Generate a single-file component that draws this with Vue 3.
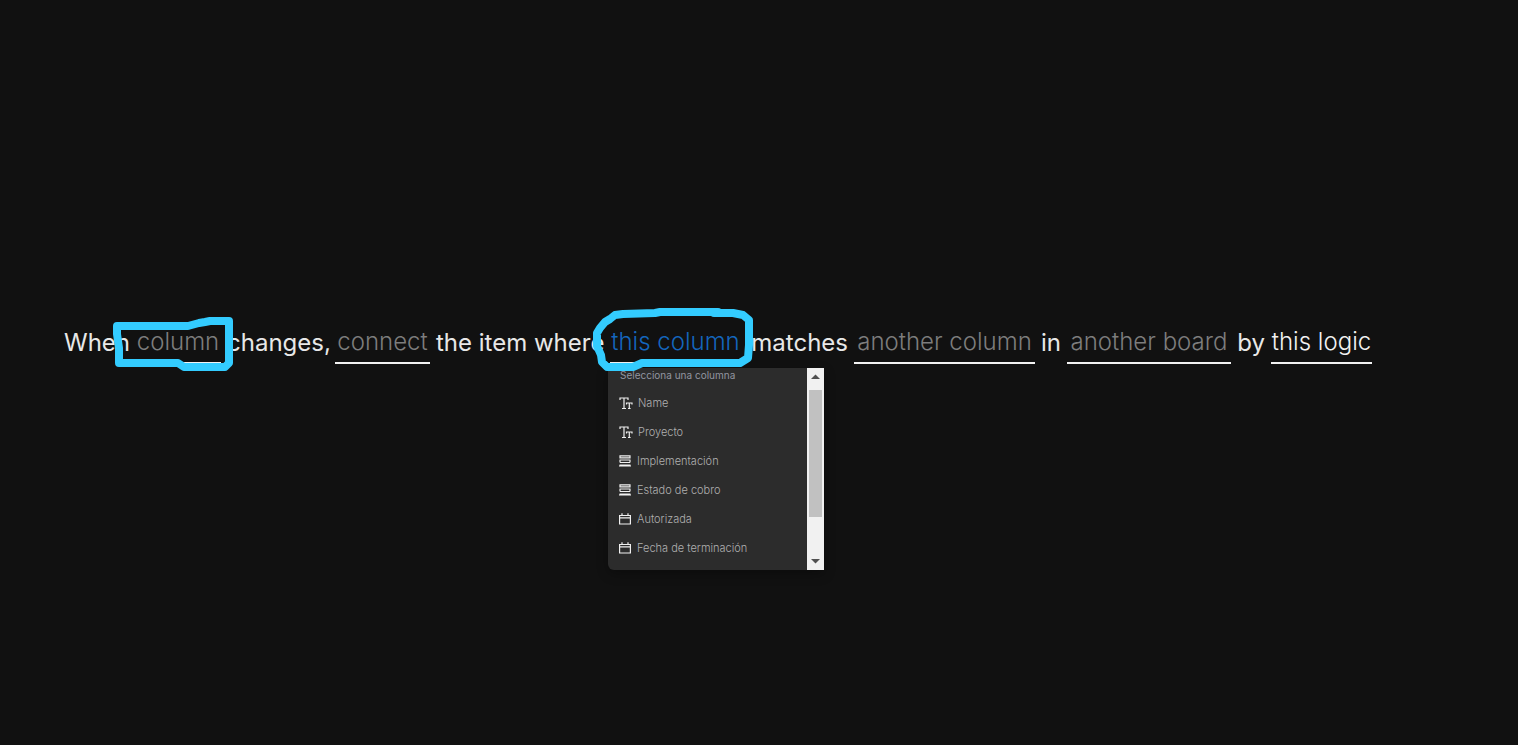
<script setup>
import { ref } from 'vue'

const parts = [
  { text: 'When' },
  { text: 'column', field: true, mark: 'box' },
  { text: 'changes,' },
  { text: 'connect', field: true },
  { text: 'the item where' },
  { text: 'this column', field: true, open: true, mark: 'round' },
  { text: 'matches' },
  { text: 'another column', field: true },
  { text: 'in' },
  { text: 'another board', field: true },
  { text: 'by' },
  { text: 'this logic', field: true, filled: true }
]

const columns = [
  { name: 'Name', icon: 'text' },
  { name: 'Proyecto', icon: 'text' },
  { name: 'Implementación', icon: 'status' },
  { name: 'Estado de cobro', icon: 'status' },
  { name: 'Autorizada', icon: 'date' },
  { name: 'Fecha de terminación', icon: 'date' }
]

const selected = ref('')
</script>

<template>
  <main class="page">
    <div class="sentence">
      <template v-for="part in parts" :key="part.text">
        <span v-if="!part.field" class="word">{{ part.text }}</span>
        <div v-else class="field">
          <button type="button" class="field-btn" :class="{ open: part.open, filled: part.filled }">{{ part.text }}</button>

          <div v-if="part.open" class="menu">
            <div class="menu-body">
              <div class="menu-title">Selecciona una columna</div>
              <ul class="options">
                <li v-for="col in columns" :key="col.name">
                  <button type="button" class="option" :class="col.icon" @click="selected = col.name">
                    <svg v-if="col.icon === 'text'" class="icon" width="14" height="13" viewBox="0 0 14 13">
                      <path d="M1 3V1h8v2M5 1v10.500M3 11.500h4M7.500 7.500V6h5.500v1.500M10.300 6v5.500M9 11.500h2.600" />
                    </svg>
                    <svg v-else-if="col.icon === 'status'" class="icon" width="12" height="13" viewBox="0 0 12 13">
                      <path d="M1 .8h10v2H1zM.5 5h11M1 7.500h10M1 5v2.500M11 5v2.500M.5 10h11M0 11h12" />
                    </svg>
                    <svg v-else class="icon" width="12" height="13" viewBox="0 0 12 13">
                      <path d="M.6 2.500h10.800v8.500H.6zM.6 4.900h10.800M3 .3v2.200M9 .3v2.200" />
                    </svg>
                    <span>{{ col.name }}</span>
                  </button>
                </li>
              </ul>
            </div>
            <div class="scroll">
              <svg width="17" height="22" viewBox="0 0 17 22"><path d="M4 11l4.500-4.500L13 11z" /></svg>
              <div class="thumb"></div>
              <svg width="17" height="17" viewBox="0 0 17 17"><path d="M4 6l4.500 4.500L13 6z" /></svg>
            </div>
          </div>

          <svg v-if="part.mark === 'box'" class="mark mark-box" width="124" height="58" viewBox="111 315 124 58">
            <path d="M117 326H188L199 323L205 322L210 321H229L229 340L229 363L225 367H184L178 363H119V348L117 334Z" />
          </svg>
          <svg v-if="part.mark === 'round'" class="mark mark-round" width="164" height="68" viewBox="591 306 164 68">
            <path d="M718 312H660L655 313L623 314L615 315L610 319L605 322L600 328L597 333V346L601 355L602 362L607 367H633L642 363H740L748 358L749 345V320L743 315L733 313H714" />
          </svg>
        </div>
      </template>
    </div>
  </main>
</template>

<style>
body {
  background: #111111;
}
</style>

<style scoped>
* {
  box-sizing: border-box;
}

.page {
  min-height: 100vh;
  padding: 324px 64px 64px;
  background: #111111;
  font-family: Inter, "Open Sans", sans-serif;
}

.sentence {
  display: grid;
  grid-template-columns: 65px 86px 102px 95px 168px 131px 101px 181px 20px 164px 28px 101px;
  column-gap: 6px;
  align-items: start;
  font-size: 24px;
  line-height: 38px;
  color: #e8e8e8;
  white-space: nowrap;
}
.word {
  text-align: right;
}

.field {
  position: relative;
}

.field-btn {
  display: block;
  width: 100%;
  height: 40px;
  padding: 0 0 2px;
  border: none;
  border-bottom: 2px solid #f2f2f2;
  background: none;
  font: inherit;
  font-weight: 300;
  line-height: 36px;
  color: #7d7d7d;
  cursor: pointer;
}
.field-btn.open {
  color: #1466bd;
}
.field-btn.filled {
  color: #f2f2f2;
}

.menu {
  position: absolute;
  top: 44px;
  left: -2px;
  display: flex;
  width: 216px;
  height: 202px;
  overflow: hidden;
  border-radius: 0 0 0 6px;
  background: #2c2c2c;
  box-shadow: 0 4px 12px rgba(0, 0, 0, 0.3);
  font-size: 11px;
  line-height: 15px;
  color: #b0b0b0;
}
.menu-body {
  flex: 1;
}
.menu-title {
  padding-left: 12px;
  margin-bottom: 6px;
  font-size: 10px;
  color: #9295a0;
}

.options {
  margin: 0;
  padding: 0;
  list-style: none;
}
.option {
  display: flex;
  align-items: center;
  gap: 6px;
  width: 100%;
  height: 29px;
  padding: 0 11px;
  border: none;
  background: none;
  font: inherit;
  font-weight: 300;
  color: inherit;
  cursor: pointer;
}
.option.text {
  gap: 5px;
}
.icon {
  fill: none;
  stroke: #f0f0f0;
  stroke-width: 1.2;
}

.scroll {
  display: flex;
  flex-direction: column;
  justify-content: space-between;
  width: 17px;
  background: #f1f1f1;
  fill: #505050;
}
.thumb {
  height: 127px;
  margin: 0 2px auto;
  background: #c1c1c1;
}

.mark {
  position: absolute;
  pointer-events: none;
  fill: none;
  stroke: #33ccff;
  stroke-width: 8;
  stroke-linecap: round;
  stroke-linejoin: round;
}
.mark-box {
  top: -9px;
  left: -24px;
}
.mark-round {
  top: -18px;
  left: -19px;
}
</style>
